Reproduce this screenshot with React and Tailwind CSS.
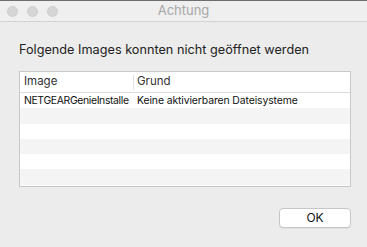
import React from "react";

const rows = [
  { image: "NETGEARGenieInstalle", grund: "Keine aktivierbaren Dateisysteme" },
  null,
  null,
  null,
  null,
  null,
];

const App = () => {
  return (
    <div
      className="w-[367px] h-[247px] bg-[#ececec] flex flex-col overflow-hidden border-t border-[#6e6e6e]"
      style={{ fontFamily: "Inter, 'Liberation Sans', sans-serif" }}
    >
      {/* Titelleiste */}
      <div className="relative h-[21px] bg-[#efefef] border-b border-[#d2d2d2] flex items-center">
        <div className="flex gap-[9px] pl-[7px]">
          <span className="w-[11px] h-[11px] rounded-full bg-[#d6d6d6] border border-[#cdcdcd]" />
          <span className="w-[11px] h-[11px] rounded-full bg-[#d6d6d6] border border-[#cdcdcd]" />
          <span className="w-[11px] h-[11px] rounded-full bg-[#d6d6d6] border border-[#cdcdcd]" />
        </div>
        <div className="absolute inset-0 flex items-center justify-center text-[13px] text-[#a8a8a8]">
          Achtung
        </div>
      </div>

      <div className="pl-[19px] pt-[19px] w-[351px] flex flex-col">
        <p className="text-[12.7px] text-[#222] leading-[17px]">
          Folgende Images konnten nicht geöffnet werden
        </p>

        <div className="mt-[13px] w-[332px] h-[116px] bg-white border border-[#c8c8c8] flex flex-col overflow-hidden">
          <div className="h-[21px] shrink-0 flex items-center border-b border-[#dcdcdc] text-[11.5px] text-[#333]">
            <div className="w-[114px] pl-[4px] border-r border-[#e2e2e2] h-[15px] flex items-center">Image</div>
            <div className="pl-[3px]">Grund</div>
          </div>
          {rows.map((r, i) => (
            <div
              key={i}
              className={`h-[15.3px] shrink-0 flex items-center text-[10.4px] text-[#111] ${
                i % 2 === 1 ? "bg-[#f4f4f4]" : "bg-white"
              }`}
            >
              {r && (
                <>
                  <div className="w-[114px] pl-[4px] whitespace-nowrap tracking-[-0.35px]">{r.image}</div>
                  <div className="pl-[3px] whitespace-nowrap tracking-[-0.1px]">{r.grund}</div>
                </>
              )}
            </div>
          ))}
        </div>

        <div className="flex justify-end mt-[21px]">
          <button className="w-[72px] h-[20px] bg-white border border-[#c6c6c6] rounded-[4px] text-[12px] text-[#111] flex items-center justify-center shadow-[0_1px_0_rgba(0,0,0,0.05)]">
            OK
          </button>
        </div>
      </div>
    </div>
  );
};

export default App;
